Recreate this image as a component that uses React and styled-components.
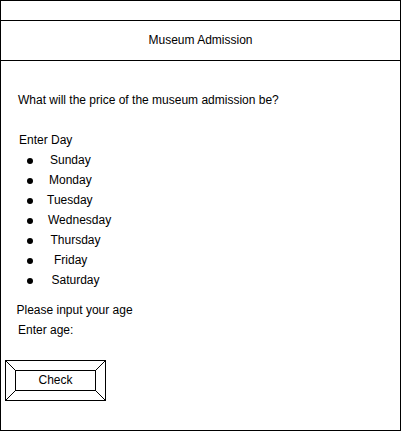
import styled, { createGlobalStyle } from 'styled-components'

const GlobalStyle = createGlobalStyle`
  html, body {
    margin: 0;
    padding: 0;
    background: #fff;
  }
  body {
    font-family: "Liberation Sans", Arial, sans-serif;
    font-size: 12px;
    color: #000;
  }
`;

const days = [
  { name: 'Sunday', x: 50 },
  { name: 'Monday', x: 49 },
  { name: 'Tuesday', x: 47 },
  { name: 'Wednesday', x: 48 },
  { name: 'Thursday', x: 50.5 },
  { name: 'Friday', x: 54 },
  { name: 'Saturday', x: 51.5 },
];

export default function App() {
  return (
    <>
      <GlobalStyle />
      <Frame>
        <TopStrip />
        <TitleBar>Museum Admission</TitleBar>
        <Content>
          <Line $x={18}>What will the price of the museum admission be?</Line>
          <Line $x={19} $top={20}>Enter Day</Line>
          <DayList>
            {days.map(d => (
              <DayRow key={d.name}>
                <Bullet />
                <DayLabel $x={d.x}>{d.name}</DayLabel>
              </DayRow>
            ))}
          </DayList>
          <Line $x={16.5} $top={10}>Please input your age</Line>
          <Line $x={18}>Enter age:</Line>
          <CheckButton type="button">
            <Bevel viewBox="0 0 101 41" width="101" height="41">
              <line x1="0.5" y1="0.5" x2="10.5" y2="10.5" />
              <line x1="100.5" y1="0.5" x2="90.5" y2="10.5" />
              <line x1="0.5" y1="40.5" x2="10.5" y2="30.5" />
              <line x1="100.5" y1="40.5" x2="90.5" y2="30.5" />
            </Bevel>
            <ButtonFace>Check</ButtonFace>
          </CheckButton>
        </Content>
      </Frame>
    </>
  )
}

const Frame = styled.div`
  box-sizing: border-box;
  width: 401px;
  height: 431px;
  border: 1px solid #000;
  display: flex;
  flex-direction: column;
`;

const TopStrip = styled.div`
  height: 19px;
  flex: none;
`;

const TitleBar = styled.div`
  flex: none;
  height: 39px;
  border-top: 1px solid #000;
  border-bottom: 1px solid #000;
  display: flex;
  align-items: center;
  justify-content: center;
  padding-bottom: 1px;
  box-sizing: content-box;
  height: 38px;
`;

const Content = styled.div`
  padding-top: 29px;
  display: flex;
  flex-direction: column;
`;

const Line = styled.div`
  height: 20px;
  line-height: 20px;
  white-space: nowrap;
  padding-left: ${p => p.$x - 1}px;
  margin-top: ${p => p.$top || 0}px;
`;

const DayList = styled.ul`
  list-style: none;
  margin: 0;
  padding: 0;
`;

const DayRow = styled.li`
  height: 20px;
  line-height: 20px;
  display: flex;
  align-items: center;
  white-space: nowrap;
`;

const Bullet = styled.span`
  flex: none;
  width: 6px;
  height: 6px;
  margin-left: 26px;
  margin-top: 1px;
  border-radius: 50%;
  background: #000;
`;

const DayLabel = styled.span`
  margin-left: ${p => p.$x - 33}px;
`;

const CheckButton = styled.button`
  position: relative;
  box-sizing: border-box;
  width: 101px;
  height: 41px;
  margin: 20px 0 0 4px;
  padding: 9px;
  border: 1px solid #000;
  background: #fff;
  font: inherit;
  color: #000;
  display: flex;
`;

const Bevel = styled.svg`
  position: absolute;
  left: -1px;
  top: -1px;
  stroke: #000;
  stroke-width: 1;
  pointer-events: none;
`;

const ButtonFace = styled.span`
  flex: 1;
  border: 1px solid #000;
  display: flex;
  align-items: center;
  justify-content: center;
  line-height: 19px;
`;
